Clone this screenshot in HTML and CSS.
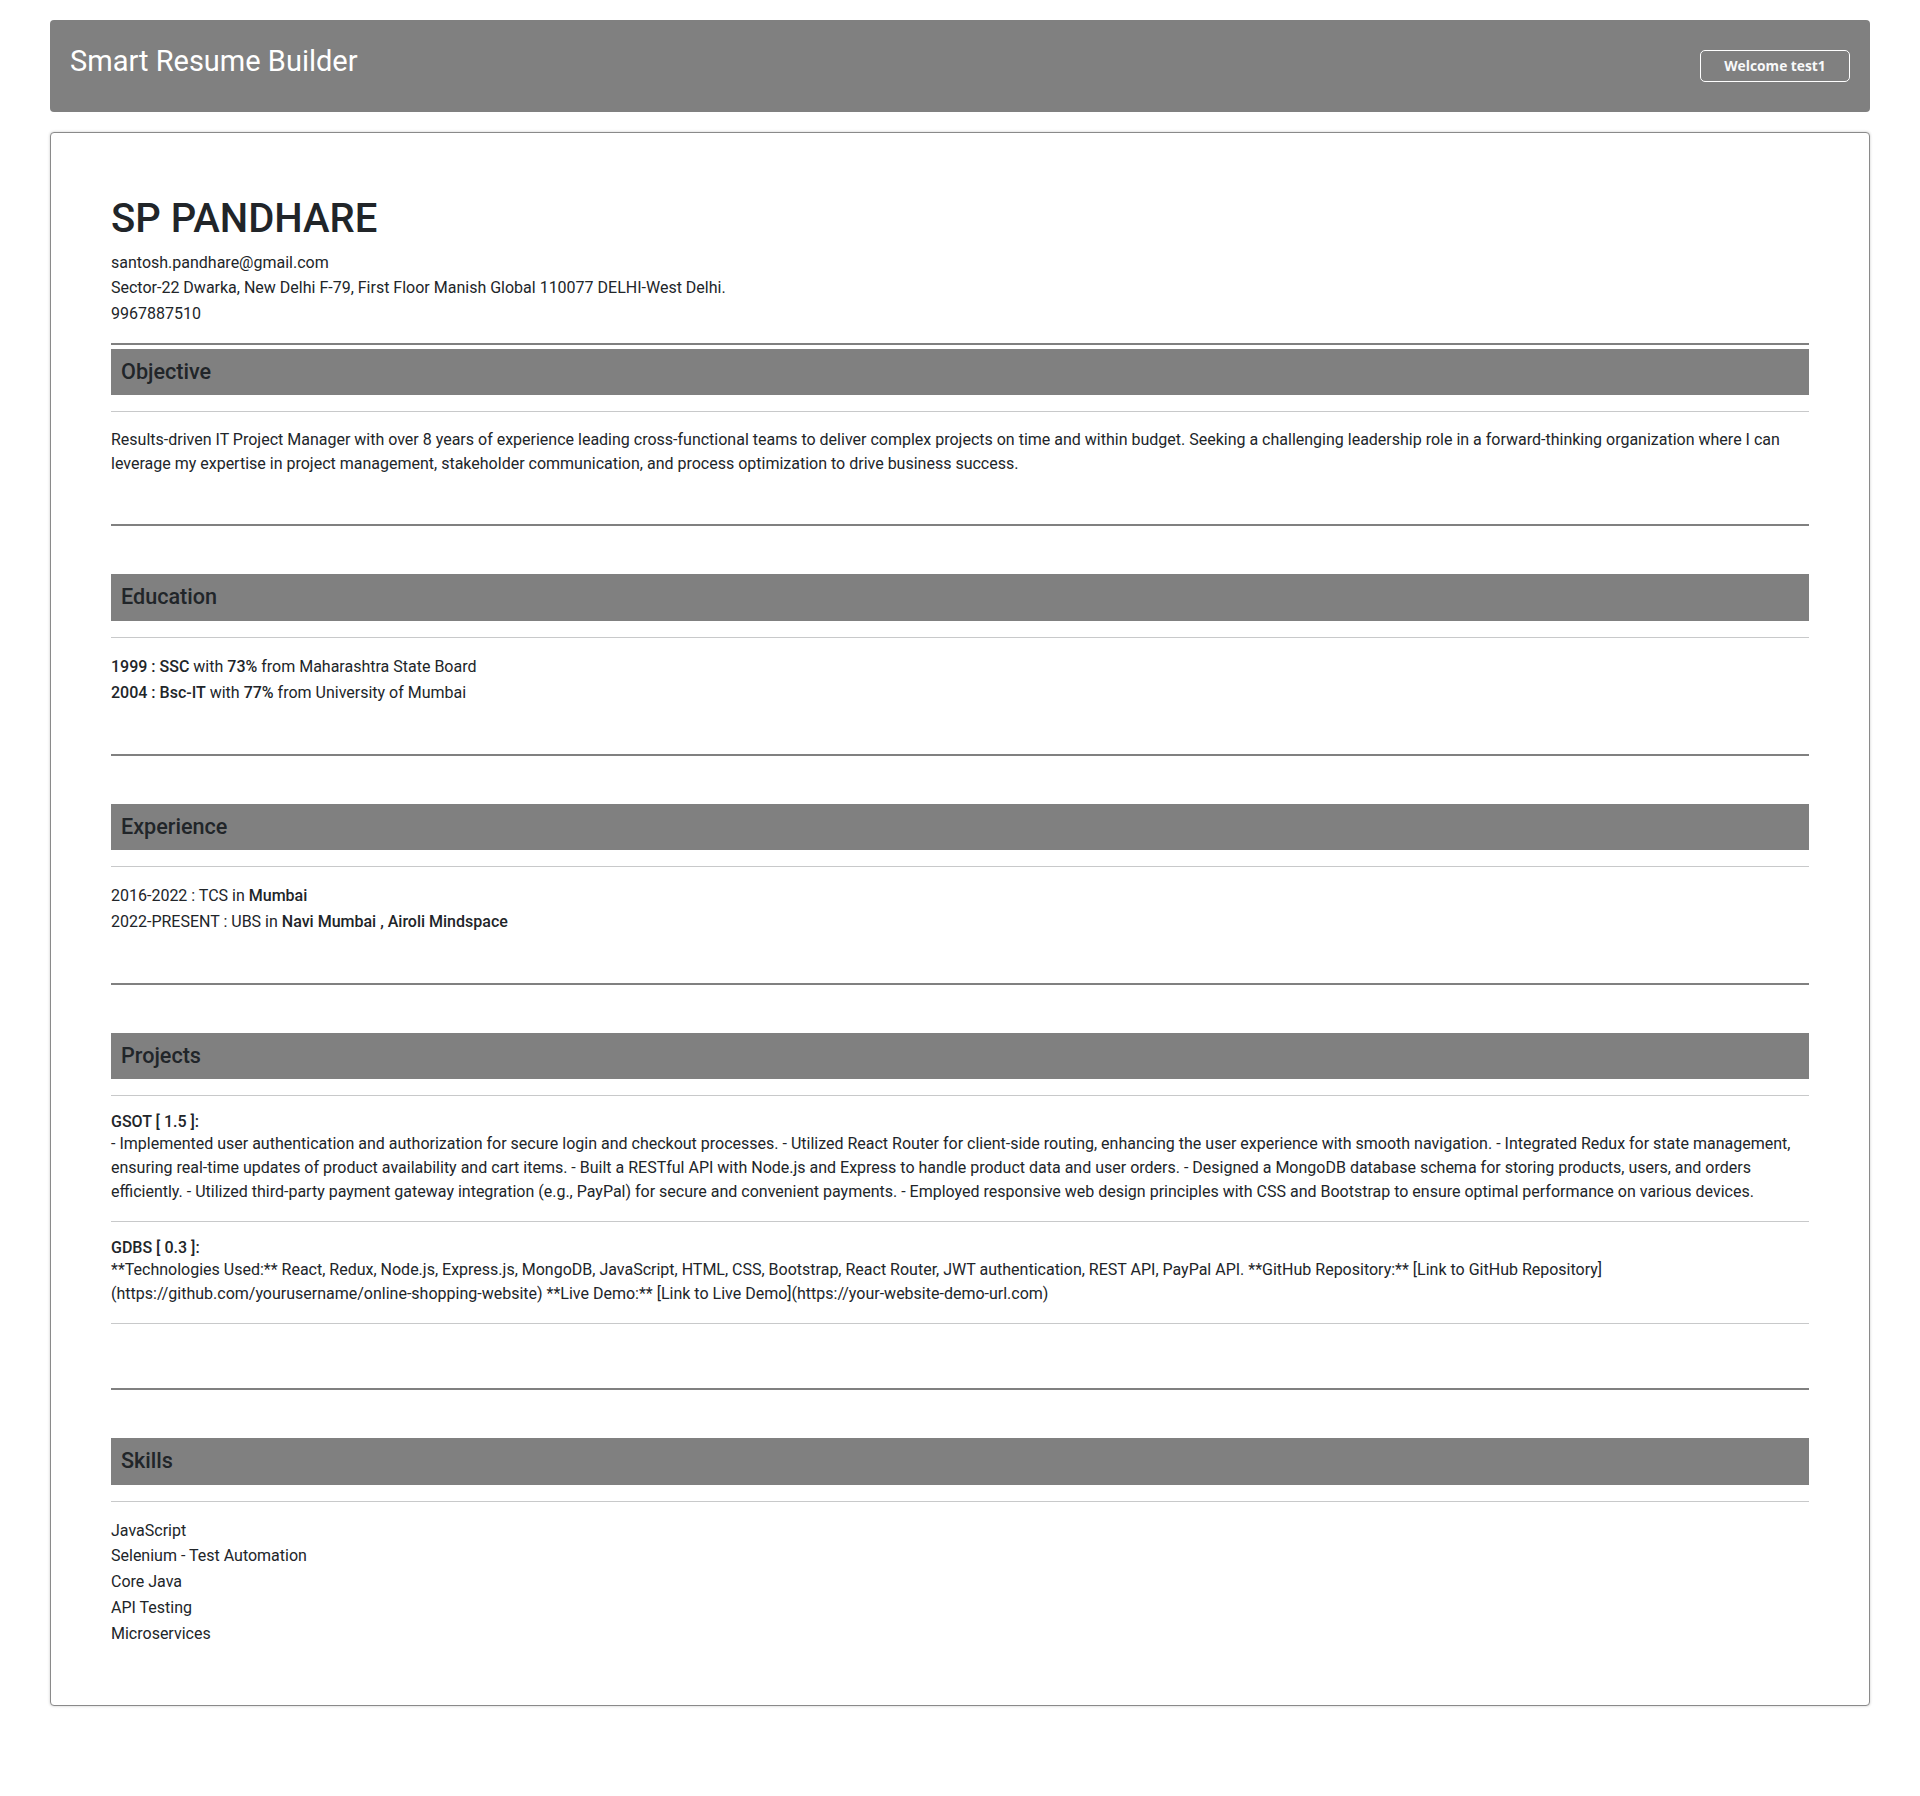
FILE: index.html
```html
<!DOCTYPE html>
<html lang="en">
<head>
<meta charset="utf-8">
<title>Smart Resume Builder</title>
<link rel="stylesheet" href="styles.css">
</head>
<body>
<div class="page">
  <header class="topbar">
    <h3 class="brand">Smart Resume Builder</h3>
    <button class="welcome" type="button">Welcome test1</button>
  </header>

  <main class="card">
    <h1 class="name">SP PANDHARE</h1>
    <div class="contact">
      <div>santosh.pandhare@gmail.com</div>
      <div>Sector-22 Dwarka, New Delhi F-79, First Floor Manish Global 110077 DELHI-West Delhi.</div>
      <div>9967887510</div>
    </div>

    <hr class="rule-dark rule-top">
    <section class="section">
      <h2 class="bar">Objective</h2>
      <hr class="rule-light">
      <p class="para">Results-driven IT Project Manager with over 8 years of experience leading cross-functional teams to deliver complex projects on time and within budget. Seeking a challenging leadership role in a forward-thinking organization where I can leverage my expertise in project management, stakeholder communication, and process optimization to drive business success.</p>
    </section>

    <hr class="rule-dark">
    <section class="section">
      <h2 class="bar">Education</h2>
      <hr class="rule-light">
      <div class="lines">
        <div><b>1999 : SSC</b> with <b>73%</b> from Maharashtra State Board</div>
        <div><b>2004 : Bsc-IT</b> with <b>77%</b> from University of Mumbai</div>
      </div>
    </section>

    <hr class="rule-dark">
    <section class="section">
      <h2 class="bar">Experience</h2>
      <hr class="rule-light">
      <div class="lines">
        <div><span class="light">2016-2022</span> : <span class="light">TCS</span> in <b>Mumbai</b></div>
        <div><span class="light">2022-PRESENT</span> : <span class="light">UBS</span> in <b>Navi Mumbai , Airoli Mindspace</b></div>
      </div>
    </section>

    <hr class="rule-dark">
    <section class="section">
      <h2 class="bar">Projects</h2>
      <hr class="rule-light">
      <h4 class="proj-title">GSOT [ 1.5 ]:</h4>
      <p class="para">- Implemented user authentication and authorization for secure login and checkout processes. - Utilized React Router for client-side routing, enhancing the user experience with smooth navigation. - Integrated Redux for state management, ensuring real-time updates of product availability and cart items. - Built a RESTful API with Node.js and Express to handle product data and user orders. - Designed a MongoDB database schema for storing products, users, and orders efficiently. - Utilized third-party payment gateway integration (e.g., PayPal) for secure and convenient payments. - Employed responsive web design principles with CSS and Bootstrap to ensure optimal performance on various devices.</p>
      <hr class="rule-light rule-item">
      <h4 class="proj-title">GDBS [ 0.3 ]:</h4>
      <p class="para">**Technologies Used:** React, Redux, Node.js, Express.js, MongoDB, JavaScript, HTML, CSS, Bootstrap, React Router, JWT authentication, REST API, PayPal API. **GitHub Repository:** [Link to GitHub Repository](https://github.com/yourusername/online-shopping-website) **Live Demo:** [Link to Live Demo](https://your-website-demo-url.com)</p>
      <hr class="rule-light rule-item">
    </section>

    <hr class="rule-dark">
    <section class="section">
      <h2 class="bar">Skills</h2>
      <hr class="rule-light">
      <div class="skills">
        <div>JavaScript</div>
        <div>Selenium - Test Automation</div>
        <div>Core Java</div>
        <div>API Testing</div>
        <div>Microservices</div>
      </div>
    </section>
  </main>
</div>
</body>
</html>
```

FILE: styles.css
```css
* { box-sizing: border-box; }

html, body {
  margin: 0;
  background: #ffffff;
}

body {
  font-family: Roboto, "Liberation Sans", Arial, sans-serif;
  font-size: 16px;
  color: #212529;
}

.page {
  padding: 20px 50px;
}

.topbar {
  display: flex;
  justify-content: space-between;
  align-items: center;
  background: #808080;
  border-radius: 4px;
  padding: 25px 20px;
}

.brand {
  margin: 0 0 8px;
  font-size: 29px;
  font-weight: 400;
  line-height: 33.6px;
  color: #ffffff;
}

.welcome {
  width: 150px;
  height: 31.5px;
  padding: 0;
  background: transparent;
  border: 1px solid #ffffff;
  border-radius: 5px;
  color: #f8f9fa;
  font-family: "Open Sans", "Noto Sans", sans-serif;
  font-weight: 700;
  font-size: 13.8px;
  line-height: 1;
}

.card {
  display: block;
  margin-top: 20px;
  border: 1px solid #8a8a8a;
  border-radius: 4px;
  box-shadow: 0 0 3px rgba(0, 0, 0, 0.22);
  padding: 62px 60px 59px;
  background: #fff;
}

.name {
  margin: 0 0 7px;
  font-size: 40px;
  font-weight: 500;
  line-height: 1.2;
  color: #212529;
}

.contact div {
  line-height: 25.7px;
}

.rule-dark {
  margin: 48px 0;
  border: 0;
  border-top: 2px solid #808080;
  height: 0;
}

.rule-top {
  margin: 16px 0 4px;
}

.section {
  display: flex;
  flex-direction: column;
}

.bar {
  margin: 0;
  padding: 10px 10px 10.5px;
  background: #808080;
  font-size: 21.6px;
  font-weight: 500;
  line-height: 1.2;
  color: #212529;
}

.rule-light {
  margin: 16px 0;
  border: 0;
  border-top: 1px solid #c8c9ca;
  height: 0;
  width: 100%;
}

.rule-item {
  margin: 17px 0 16px;
}

.para {
  margin: 0;
  line-height: 24px;
}

.lines div {
  line-height: 26px;
}

.lines b {
  font-weight: 500;
}

.lines .light {
  font-weight: 400;
}

.proj-title {
  margin: 0;
  font-size: 16px;
  font-weight: 500;
  line-height: 20px;
}

.skills div {
  line-height: 25.7px;
}
```
